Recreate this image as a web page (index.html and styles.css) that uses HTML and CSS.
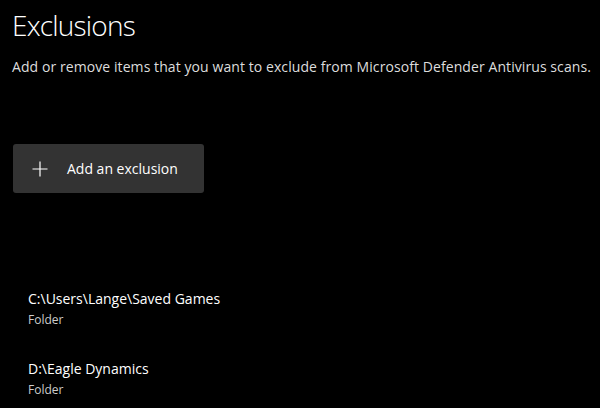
FILE: index.html
```html
<!DOCTYPE html>
<html lang="en">
<head>
    <meta charset="UTF-8">
    <title>Exclusions</title>
    <link rel="stylesheet" href="styles.css">
</head>
<body>
    <div class="page">
        <h1 class="title">Exclusions</h1>
        <p class="desc">Add or remove items that you want to exclude from Microsoft Defender Antivirus scans.</p>

        <button class="add-btn" type="button">
            <svg class="plus" width="16" height="16" viewBox="0 0 16 16">
                <path d="M8 0.5V15.5M0.5 8H15.5" stroke="#fff" stroke-width="1.2" fill="none"/>
            </svg>
            <span>Add an exclusion</span>
        </button>

        <ul class="items">
            <li class="item">
                <div class="item-path">C:\Users\Lange\Saved Games</div>
                <div class="item-type">Folder</div>
            </li>
            <li class="item">
                <div class="item-path">D:\Eagle Dynamics</div>
                <div class="item-type">Folder</div>
            </li>
        </ul>
    </div>
</body>
</html>
```

FILE: styles.css
```css
body {
    margin: 0;
    background: #000;
    color: #fff;
    font-family: "Open Sans", "Noto Sans", sans-serif;
    overflow: hidden;
}

.page {
    padding: 5px 8px 0 12px;
}

.title {
    font-weight: 300;
    font-size: 28px;
    line-height: 40px;
    letter-spacing: -0.8px;
    margin: 0;
}

.desc {
    font-size: 14px;
    line-height: 20px;
    letter-spacing: 0.08px;
    white-space: nowrap;
    color: #ddd;
    margin: 12px 0 0 0;
}

.add-btn {
    display: flex;
    align-items: center;
    width: 191px;
    height: 49px;
    margin: 67px 0 0 1px;
    padding: 0 0 0 19px;
    background: #333;
    border: none;
    border-radius: 3px;
    color: #fff;
    font-family: inherit;
    font-size: 14px;
}

.plus {
    margin-right: 19px;
}

.items {
    list-style: none;
    margin: 96px 0 0 0;
    padding: 0 0 0 16px;
}

.item {
    margin-bottom: 28px;
}

.item:last-child {
    margin-bottom: 0;
}

.item-path {
    font-size: 14px;
    line-height: 20px;
}

.item-type {
    font-size: 12px;
    line-height: 22px;
    color: #ccc;
}
```
